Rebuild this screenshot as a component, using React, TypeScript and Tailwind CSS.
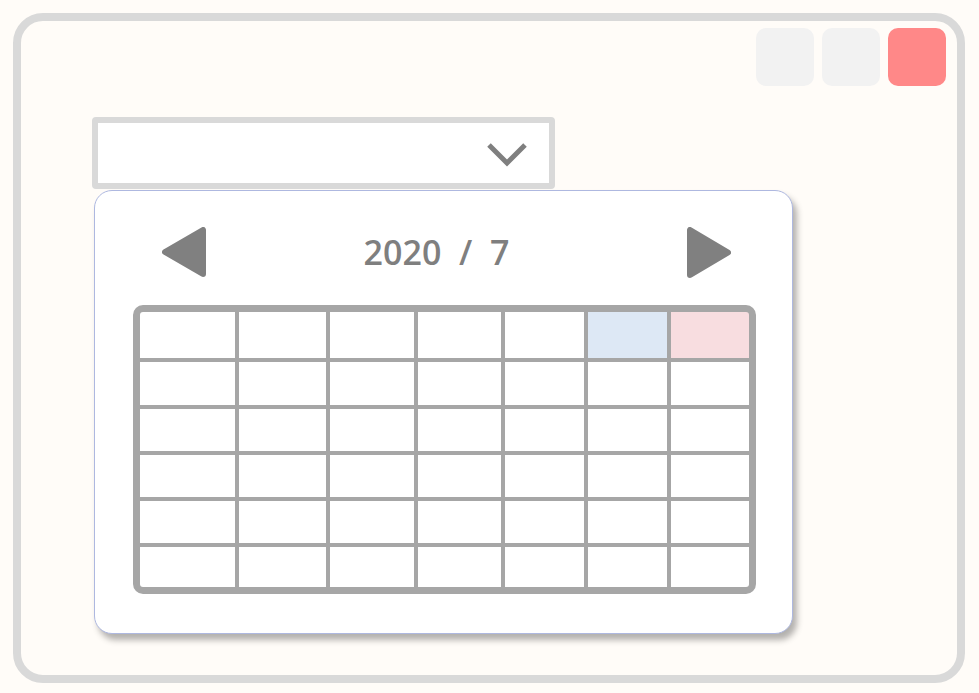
import React from "react";

// Calendar picker mock: window frame, select box and an open month popup
const COLS = 7;
const ROWS = 6;

function LeftTriangle() {
  return (
    <svg width="44" height="50" viewBox="0 0 44 50">
      <polygon points="41,3 41,47 3,25" fill="#808080" stroke="#808080" strokeWidth="6" strokeLinejoin="round" />
    </svg>
  );
}

function RightTriangle() {
  return (
    <svg width="44" height="51" viewBox="0 0 44 51">
      <polygon points="3,3 3,48 41,25.5" fill="#808080" stroke="#808080" strokeWidth="6" strokeLinejoin="round" />
    </svg>
  );
}

function Chevron() {
  return (
    <svg width="40" height="26" viewBox="0 0 40 26">
      <polyline points="2,3 20,21 38,3" fill="none" stroke="#7f7f7f" strokeWidth="5" strokeLinejoin="miter" />
    </svg>
  );
}

export default function App() {
  const cells = Array.from({ length: COLS * ROWS }, (_, i) => i);

  return (
    <div className="min-h-screen w-full bg-[#fffcf8] pt-[13px] pl-[13px]" style={{ fontFamily: '"Open Sans", "DejaVu Sans", sans-serif' }}>
      <div className="w-[952px] h-[670px] border-[8px] border-[#d9d9d9] rounded-[30px] bg-[#fffcf8] flex flex-col">
        {/* Window controls */}
        <div className="flex justify-end gap-[8px] pt-[7px] pr-[11px]">
          <div className="w-[58px] h-[58px] rounded-[10px] bg-[#f2f2f2]" />
          <div className="w-[58px] h-[58px] rounded-[10px] bg-[#f2f2f2]" />
          <div className="w-[58px] h-[58px] rounded-[10px] bg-[#ff8888]" />
        </div>

        <div className="pl-[71px] mt-[31px] flex flex-col">
          {/* Select box */}
          <div className="w-[463px] h-[72px] border-[6px] border-[#d9d9d9] rounded-[4px] bg-white flex items-center justify-end pr-[22px] pt-[4px]">
            <Chevron />
          </div>

          {/* Calendar popup */}
          <div className="ml-[2px] mt-[1px] w-[699px] h-[444px] rounded-[18px] border border-[#aeb8e0] bg-white shadow-[4px_6px_6px_rgba(0,0,0,0.3)] flex flex-col">
            <div className="mt-[34px] h-[54px] flex items-center pl-[67px] pr-[61px]">
              <LeftTriangle />
              <div className="flex-1 text-center text-[34px] leading-none font-semibold text-[#7f7f7f] whitespace-pre pr-[20px]">
                2020  /  7
              </div>
              <RightTriangle />
            </div>

            <div className="ml-[38px] mt-[26px] w-[623px] border-[7px] border-[#a6a6a6] rounded-[10px] bg-[#a6a6a6] overflow-hidden grid grid-cols-[95px_87px_84px_83px_79px_79px_78px] grid-rows-[46px_43px_42px_42px_42px_40px] gap-[4px]">
              {cells.map((i) => (
                <div
                  key={i}
                  className={i === 5 ? "bg-[#dde8f5]" : i === 6 ? "bg-[#f8dde0]" : "bg-white"}
                />
              ))}
            </div>
          </div>
        </div>
      </div>
    </div>
  );
}
